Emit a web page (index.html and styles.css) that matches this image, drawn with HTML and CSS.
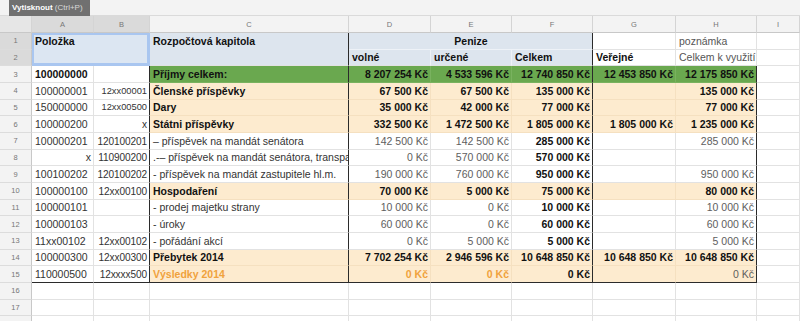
FILE: index.html
```html
<!DOCTYPE html>
<html lang="cs">
<head>
<meta charset="utf-8">
<title>Rozpočet</title>
<link rel="stylesheet" href="styles.css">
</head>
<body>
<div class="topbar"><div class="tip"><b>Vytisknout</b> (Ctrl+P)</div></div>
<table class="sheet">
<colgroup>
<col class="w-rh"><col class="w-a"><col class="w-b"><col class="w-c"><col class="w-d"><col class="w-e"><col class="w-f"><col class="w-g"><col class="w-h"><col class="w-i">
</colgroup>
<tr class="colhdr">
<td class="corner"></td><td class="ch sel">A</td><td class="ch sel">B</td><td class="ch">C</td><td class="ch">D</td><td class="ch">E</td><td class="ch">F</td><td class="ch">G</td><td class="ch">H</td><td class="ch">I</td>
</tr>
<tr class="r">
<td class="rh sel">1</td>
<td class="selbox b top" colspan="2" rowspan="2">Položka</td>
<td class="hd b top dr" rowspan="2">Rozpočtová kapitola</td>
<td class="hd b ctr dr hdb" colspan="3">Penize</td>
<td></td>
<td class="note">poznámka</td>
<td></td>
</tr>
<tr class="r">
<td class="rh sel">2</td>
<td class="hd b hdr">volné</td>
<td class="hd b hdr">určené</td>
<td class="hd b dr">Celkem</td>
<td class="b">Veřejné</td>
<td class="note">Celkem k využití</td>
<td></td>
</tr>
<tr class="r">
<td class="rh">3</td>
<td class="b">100000000</td><td class="bc dr"></td>
<td class="gr b dr">Příjmy celkem:</td>
<td class="gr b n">8 207 254 Kč</td><td class="gr b n">4 533 596 Kč</td><td class="gr b n dr">12 740 850 Kč</td>
<td class="gr b n">12 453 850 Kč</td><td class="gr b n dr">12 175 850 Kč</td><td></td>
</tr>
<tr class="r">
<td class="rh">4</td>
<td>100000001</td><td class="bc n dr sm">12xx00001</td>
<td class="pe b dr">Členské příspěvky</td>
<td class="pe b n">67 500 Kč</td><td class="pe b n">67 500 Kč</td><td class="pe b n dr">135 000 Kč</td>
<td class="pe"></td><td class="pe b n dr">135 000 Kč</td><td></td>
</tr>
<tr class="r">
<td class="rh">5</td>
<td>150000000</td><td class="bc n dr sm">12xx00500</td>
<td class="pe b dr">Dary</td>
<td class="pe b n">35 000 Kč</td><td class="pe b n">42 000 Kč</td><td class="pe b n dr">77 000 Kč</td>
<td class="pe"></td><td class="pe b n dr">77 000 Kč</td><td></td>
</tr>
<tr class="r">
<td class="rh">6</td>
<td>100000200</td><td class="bc n dr">x</td>
<td class="pe b dr">Státni příspěvky</td>
<td class="pe b n">332 500 Kč</td><td class="pe b n">1 472 500 Kč</td><td class="pe b n dr">1 805 000 Kč</td>
<td class="pe b n">1 805 000 Kč</td><td class="pe b n dr">1 235 000 Kč</td><td></td>
</tr>
<tr class="r">
<td class="rh">7</td>
<td>100000201</td><td class="bc n dr">120100201</td>
<td class="dr">– příspěvek na mandát senátora</td>
<td class="n g">142 500 Kč</td><td class="n g">142 500 Kč</td><td class="b n dr">285 000 Kč</td>
<td></td><td class="n g dr">285 000 Kč</td><td></td>
</tr>
<tr class="r">
<td class="rh">8</td>
<td class="n">x</td><td class="bc n dr">110900200</td>
<td class="dr">.-– příspěvek na mandát senátora, transparentní</td>
<td class="n g">0 Kč</td><td class="n g">570 000 Kč</td><td class="b n dr">570 000 Kč</td>
<td></td><td class="dr"></td><td></td>
</tr>
<tr class="r">
<td class="rh">9</td>
<td>100100202</td><td class="bc n dr">120100202</td>
<td class="dr">- příspěvek na mandát zastupitele hl.m.</td>
<td class="n g">190 000 Kč</td><td class="n g">760 000 Kč</td><td class="b n dr">950 000 Kč</td>
<td></td><td class="n g dr">950 000 Kč</td><td></td>
</tr>
<tr class="r">
<td class="rh">10</td>
<td>100000100</td><td class="bc n dr">12xx00100</td>
<td class="pe b dr">Hospodaření</td>
<td class="pe b n">70 000 Kč</td><td class="pe b n">5 000 Kč</td><td class="pe b n dr">75 000 Kč</td>
<td class="pe"></td><td class="pe b n dr">80 000 Kč</td><td></td>
</tr>
<tr class="r">
<td class="rh">11</td>
<td>100000101</td><td class="bc dr"></td>
<td class="dr">- prodej majetku strany</td>
<td class="n g">10 000 Kč</td><td class="n g">0 Kč</td><td class="b n dr">10 000 Kč</td>
<td></td><td class="n g dr">10 000 Kč</td><td></td>
</tr>
<tr class="r">
<td class="rh">12</td>
<td>100000103</td><td class="bc dr"></td>
<td class="dr">- úroky</td>
<td class="n g">60 000 Kč</td><td class="n g">0 Kč</td><td class="b n dr">60 000 Kč</td>
<td></td><td class="n g dr">60 000 Kč</td><td></td>
</tr>
<tr class="r">
<td class="rh">13</td>
<td>11xx00102</td><td class="bc n dr">12xx00102</td>
<td class="dr">- pořádání akcí</td>
<td class="n g">0 Kč</td><td class="n g">5 000 Kč</td><td class="b n dr">5 000 Kč</td>
<td></td><td class="n g dr">5 000 Kč</td><td></td>
</tr>
<tr class="r">
<td class="rh">14</td>
<td>100000300</td><td class="bc n dr">12xx00300</td>
<td class="pe b dr">Přebytek 2014</td>
<td class="pe b n">7 702 254 Kč</td><td class="pe b n">2 946 596 Kč</td><td class="pe b n dr">10 648 850 Kč</td>
<td class="pe b n">10 648 850 Kč</td><td class="pe b n dr">10 648 850 Kč</td><td></td>
</tr>
<tr class="r last">
<td class="rh">15</td>
<td class="db">110000500</td><td class="bc n dr db">12xxxx500</td>
<td class="pe b or dr db">Výsledky 2014</td>
<td class="pe b n or db">0 Kč</td><td class="pe b n or db">0 Kč</td><td class="pe b n dr db">0 Kč</td>
<td class="pe db"></td><td class="pe n g dr db">0 Kč</td><td></td>
</tr>
<tr class="r"><td class="rh">16</td><td></td><td></td><td></td><td></td><td></td><td></td><td></td><td></td><td></td></tr>
<tr class="r"><td class="rh">17</td><td></td><td></td><td></td><td></td><td></td><td></td><td></td><td></td><td></td></tr>
<tr class="r"><td class="rh">18</td><td></td><td></td><td></td><td></td><td></td><td></td><td></td><td></td><td></td></tr>
</table>
</body>
</html>
```

FILE: styles.css
```css
html, body {
  margin: 0;
  padding: 0;
  background: #ffffff;
  overflow: hidden;
}
body {
  width: 800px;
  height: 321px;
  font-family: "Liberation Sans", Arial, sans-serif;
  position: relative;
}
.topbar {
  height: 15px;
  background: #f3f3f3;
  border-bottom: 1px solid #dadada;
  position: relative;
}
.tip {
  position: absolute;
  left: 9px;
  top: 0;
  width: 81px;
  height: 16px;
  background: #707070;
  color: #d8d8d8;
  font-size: 8px;
  line-height: 16px;
  padding-left: 3px;
  box-sizing: border-box;
  white-space: nowrap;
  z-index: 2;
}
.tip b {
  color: #ffffff;
}
.sheet {
  table-layout: fixed;
  border-collapse: separate;
  border-spacing: 0;
  width: 800px;
  font-size: 10.5px;
  color: #333333;
}
.w-rh { width: 32px; }
.w-a { width: 62px; }
.w-b { width: 56px; }
.w-c { width: 199px; }
.w-d { width: 82px; }
.w-e { width: 81px; }
.w-f { width: 81px; }
.w-g { width: 83px; }
.w-h { width: 81px; }
.w-i { width: 43px; }

.sheet td {
  border-right: 1px solid #e2e2e2;
  border-bottom: 1px solid #e2e2e2;
  padding: 0 2px 1px 3px;
  line-height: 13px;
  white-space: nowrap;
  overflow: hidden;
  vertical-align: bottom;
  box-sizing: border-box;
}
.sheet td.bc {
  padding-left: 0;
  padding-right: 2px;
  font-size: 10.1px;
  letter-spacing: -0.1px;
}
.colhdr {
  height: 17px;
}
.colhdr td {
  background: #f3f3f3;
  color: #777777;
  font-size: 7.5px;
  text-align: center;
  vertical-align: middle;
  padding: 0;
  border-right: 1px solid #d4d4d4;
  border-bottom: 1px solid #c8c8c8;
}
.colhdr td.corner {
  background: #e6e6e6;
}
.colhdr td.sel {
  background: #dadada;
}
.r {
  height: 16.67px;
}
.sheet td.rh {
  background: #f3f3f3;
  color: #777777;
  font-size: 7.5px;
  text-align: center;
  vertical-align: middle;
  padding: 0;
  border-right: 1px solid #c8c8c8;
  border-bottom: 1px solid #dcdcdc;
}
.sheet td.rh.sel {
  background: #dadada;
}
.b {
  font-weight: bold;
  color: #111111;
}
.n {
  text-align: right;
}
.ctr {
  text-align: center;
}
.sheet td.top {
  vertical-align: top;
  padding-top: 2px;
}
.g {
  color: #5e5e5e;
}
.note {
  color: #555555;
}
.sheet td.sm {
  font-size: 9.3px;
  letter-spacing: 0;
}
.hd {
  background: #dde5ee;
}
.sheet td.hdb {
  border-bottom-color: #eef2f7;
}
.sheet td.hdr {
  border-right-color: #eef2f7;
}
.sheet td.selbox {
  background: #dce6f2;
  box-shadow: inset 0 0 0 2px #a9c6f0;
  border-right-color: #a9c6f0;
  border-bottom-color: #a9c6f0;
}
.gr {
  background: #6aa84f;
}
.sheet td.gr {
  border-right-color: #79b25f;
  border-bottom-color: #79b25f;
}
.pe {
  background: #fdebcf;
}
.sheet td.pe {
  border-right-color: #f5e0c0;
  border-bottom-color: #f5e0c0;
}
.or {
  color: #f0a23c;
}
.sheet td.dr {
  border-right-color: #2b2b2b;
}
.sheet td.db {
  border-bottom-color: #2b2b2b;
}
```
